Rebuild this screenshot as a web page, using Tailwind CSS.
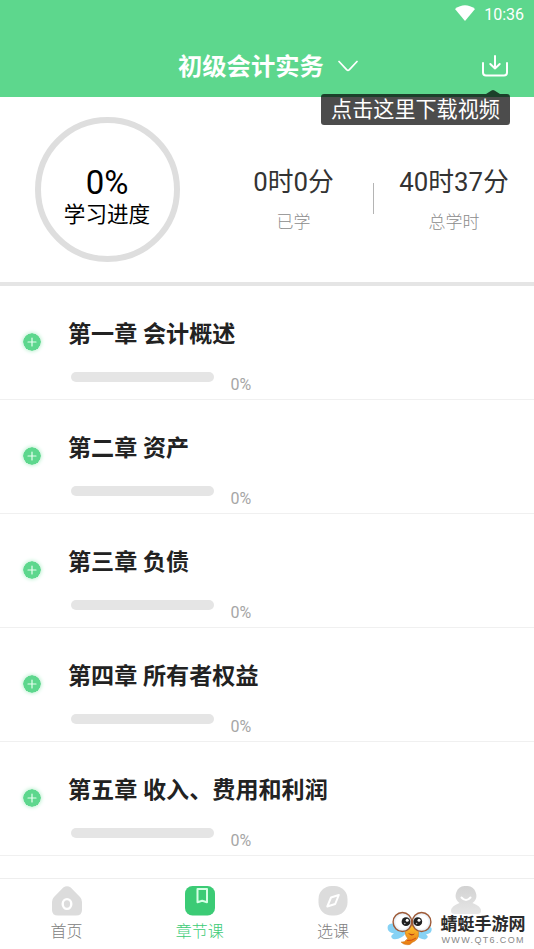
<!DOCTYPE html>
<html lang="zh-CN">
<head>
<meta charset="utf-8">
<title>初级会计实务</title>
<script src="https://cdn.jsdelivr.net/npm/@tailwindcss/browser@4"></script>
</head>
<body class="bg-white font-['Roboto','Noto_Sans_CJK_SC',sans-serif]">
<div class="relative flex h-[949px] w-[534px] flex-col overflow-hidden bg-white">
  <header class="relative z-10 flex h-[97px] shrink-0 flex-col bg-[#5dd78d] text-white">
    <div class="flex h-[28px] items-center justify-end gap-[9px] pr-[10px]">
      <svg class="-mt-[2px] h-[16px] w-[20px]" viewBox="0 0 20 16" fill="currentColor"><path d="M0 4Q10-3.5 20 4L10 16Z"/></svg>
      <span class="pt-[1px] text-[16px] leading-[28px]">10:36</span>
    </div>
    <div class="flex h-[69px] items-center pt-[6px]">
      <h1 class="ml-[178px] pt-[2px] text-[24.3px] leading-[36px] font-bold whitespace-nowrap">初级会计实务</h1>
      <svg class="ml-[14px] h-[12px] w-[20px]" viewBox="0 0 20 12" fill="none" stroke="currentColor" stroke-width="1.7" stroke-linecap="round" stroke-linejoin="round"><path d="M1 1.5L8.6 9.7Q10 11 11.4 9.7L19 1.5"/></svg>
      <svg class="ml-[124px] h-[22px] w-[26px]" viewBox="0 0 26 22" fill="none" stroke="currentColor" stroke-width="2" stroke-linecap="round" stroke-linejoin="round"><path d="M1 8V17.5Q1 20.5 4 20.5H22Q25 20.5 25 17.5V8M13 1V13.5M8.3 9L13 13.5L17.7 9"/></svg>
    </div>
    <div class="absolute top-[90px] left-[321px] flex w-[189px] flex-col">
      <svg class="ml-[165px] h-[4px] w-[14px]" viewBox="0 0 14 4" fill="#000" fill-opacity=".7"><path d="M0 4L5.5 .6Q7-.4 8.5 .6L14 4Z"/></svg>
      <div class="h-[31px] rounded-[3px] bg-black/70 text-center text-[21.1px] leading-[31px] whitespace-nowrap">点击这里下载视频</div>
    </div>
  </header>

  <section class="flex h-[189px] shrink-0 border-b-4 border-[#e5e5e5]">
    <div class="mt-[20px] ml-[34.5px] flex h-[145px] w-[145px] flex-col items-center rounded-full border-[6px] border-[#dedede] pt-[42px] text-black">
      <div class="text-[33px] leading-[36px]">0%</div>
      <div class="text-[21.6px] leading-[28px]">学习进度</div>
    </div>
    <div class="mt-[67px] ml-[64px] flex w-[100px] flex-col items-center">
      <div class="text-[25.8px] leading-[36px] whitespace-nowrap text-[#333]">0时0分</div>
      <div class="mt-[9px] text-[17px] leading-[26px] font-light text-[#8c8c8c]">已学</div>
    </div>
    <div class="mt-[86px] ml-[29.5px] h-[31px] w-px bg-[#b4b4b4]"></div>
    <div class="mt-[67px] ml-[20px] flex w-[120px] flex-col items-center">
      <div class="text-[25.8px] leading-[36px] whitespace-nowrap text-[#333]">40时37分</div>
      <div class="mt-[9px] text-[17px] leading-[26px] font-light text-[#8c8c8c]">总学时</div>
    </div>
  </section>

  <main class="h-[592px] shrink-0 overflow-hidden" id="chapters"></main>
  <template id="row">
    <article class="flex h-[114px] border-b border-[#f0f0f0]">
      <svg class="mt-[47px] ml-[23px] h-[18px] w-[18px] shrink-0 rounded-full shadow-[0_0_4px_#a5ebc0]" viewBox="0 0 18 18"><circle cx="9" cy="9" r="9" fill="#5dd78d"/><path d="M9 5V13M5 9H13" stroke="#e8fff0" stroke-width="1.2" stroke-linecap="round"/></svg>
      <div class="ml-[27px] pt-[31px]">
        <h2 class="text-[23.1px] leading-[36px] font-bold whitespace-nowrap text-[#222]"></h2>
        <div class="mt-[18px] flex pl-[3px]">
          <div class="mt-[1px] h-[10px] w-[143px] rounded-full bg-[#e5e5e5]"></div>
          <div class="ml-[16.5px] pt-[1px] text-[16px] leading-[26px] text-[#a6a6a6]">0%</div>
        </div>
      </div>
    </article>
  </template>

  <nav class="grid h-[71px] shrink-0 grid-cols-4 border-t border-[#eee] bg-white pr-[1px] text-center text-[16px] leading-[24px] font-light text-[#808080]">
    <div class="flex flex-col items-center pt-[7px]">
      <svg class="h-[30px] w-[30px]" viewBox="0 0 30 30"><path d="M11.3 1.5Q15-1 18.7 1.5L28 11Q30 13 30 16V24Q30 29.5 24 29.5H6Q0 29.5 0 24V16Q0 13 2 11Z" fill="#dcdcdc"/><ellipse cx="15" cy="18" rx="4.3" ry="4.9" fill="none" stroke="#fff" stroke-width="2.4"/></svg>
      <span class="mt-[3.5px]">首页</span>
    </div>
    <div class="flex flex-col items-center pt-[7px] text-[#3bcb75]">
      <svg class="h-[30px] w-[30px]" viewBox="0 0 30 30"><rect width="30" height="29.5" rx="7.5" fill="#3bcb75"/><path d="M12.5 3H22V16.2L17.2 14.8L12.5 16.2Z" fill="none" stroke="#d5ffe5" stroke-width="2" stroke-linejoin="round"/></svg>
      <span class="mt-[3.5px]">章节课</span>
    </div>
    <div class="flex flex-col items-center pt-[7px]">
      <svg class="h-[30px] w-[30px]" viewBox="0 0 30 30"><rect x=".5" width="29" height="29.5" rx="13" fill="#dcdcdc"/><path d="M20.8 9L13 11.5L9.3 20.5L17.2 18Z" fill="none" stroke="#fff" stroke-width="2" stroke-linejoin="round"/></svg>
      <span class="mt-[3.5px]">选课</span>
    </div>
    <div class="flex flex-col items-center pt-[7px]">
      <svg class="h-[30px] w-[30px]" viewBox="0 0 30 30"><defs><linearGradient id="fade" x2="0" y2="1"><stop stop-color="#d2d2d2"/><stop offset="1" stop-color="#e6e6e6"/></linearGradient></defs><path d="M15 0A9.7 9.5 0 0 1 21.5 17Q30 20 30 25Q30 28 26 28H4Q0 28 0 25Q0 20 8.5 17A9.7 9.5 0 0 1 15 0Z" fill="url(#fade)"/><path d="M10.5 11.5Q15 16.5 19.5 11.5" fill="none" stroke="#fff" stroke-width="2" stroke-linecap="round"/></svg>
    </div>
  </nav>

  <div class="absolute top-[911px] left-[387px] flex">
    <svg class="h-[36px] w-[46px]" viewBox="0 0 46 36">
      <defs><radialGradient id="eye"><stop offset=".65" stop-color="#fff"/><stop offset="1" stop-color="#d8e3ed"/></radialGradient><linearGradient id="body" x1="0" y1="0" x2="0" y2="1"><stop stop-color="#ffc42d"/><stop offset="1" stop-color="#e9790f"/></linearGradient></defs>
      <g fill="#86d2f5"><path d="M18 18Q5 9 1 14.5Q-1 21 7 22.5Q2 25 6 28Q14 29 19 22Z"/><path d="M29 18Q40 11 44.5 17Q46 22 39 23.5Q43 26 38 28.5Q32 28 28 23Z"/></g>
      <path d="M19 16Q25 11 31 18Q33 27 28 30Q25 31 23 33.5Q17 34.5 14 31Q18 31.5 19 29Q22 28 19 25Q17 20 19 16Z" fill="url(#body)" stroke="#c9731a" stroke-width=".5"/>
      <path d="M20 29.5Q25 30 29 27" fill="none" stroke="#d44c16" stroke-width="1"/>
      <ellipse cx="15.4" cy="11" rx="9.3" ry="9.5" fill="url(#eye)" stroke="#9e5a37" stroke-width="1.4"/>
      <ellipse cx="34.6" cy="11" rx="9.3" ry="9.5" fill="url(#eye)" stroke="#9e5a37" stroke-width="1.4"/>
      <circle cx="19" cy="10.7" r="4.4" fill="#202020"/><circle cx="30.8" cy="10.7" r="4.4" fill="#202020"/>
      <circle cx="20.2" cy="9.2" r="1.5" fill="#fff"/><circle cx="32" cy="9.2" r="1.5" fill="#fff"/><circle cx="17.8" cy="12.5" r=".8" fill="#bbb"/><circle cx="29.6" cy="12.5" r=".8" fill="#bbb"/>
      <path d="M21 22Q24.5 26.5 28 22.5Q24.5 24 21 22Z" fill="#b13a14"/>
    </svg>
    <div class="ml-[7.5px] flex flex-col pt-[2px]">
      <div class="text-[17px] leading-[22px] font-bold whitespace-nowrap text-[#2b2b2b]">蜻蜓手游网</div>
      <div class="-mt-px pl-[1px] font-['Liberation_Sans',sans-serif] text-[9px] leading-[12px] tracking-[1.35px] whitespace-nowrap text-[#888]">WWW.QT6.COM</div>
    </div>
  </div>
</div>
<script>
const list = document.getElementById('chapters');
const row = document.getElementById('row');
['第一章 会计概述', '第二章 资产', '第三章 负债', '第四章 所有者权益', '第五章 收入、费用和利润'].forEach(title => {
  const item = row.content.cloneNode(true);
  item.querySelector('h2').textContent = title;
  list.append(item);
});
</script>
</body>
</html>
